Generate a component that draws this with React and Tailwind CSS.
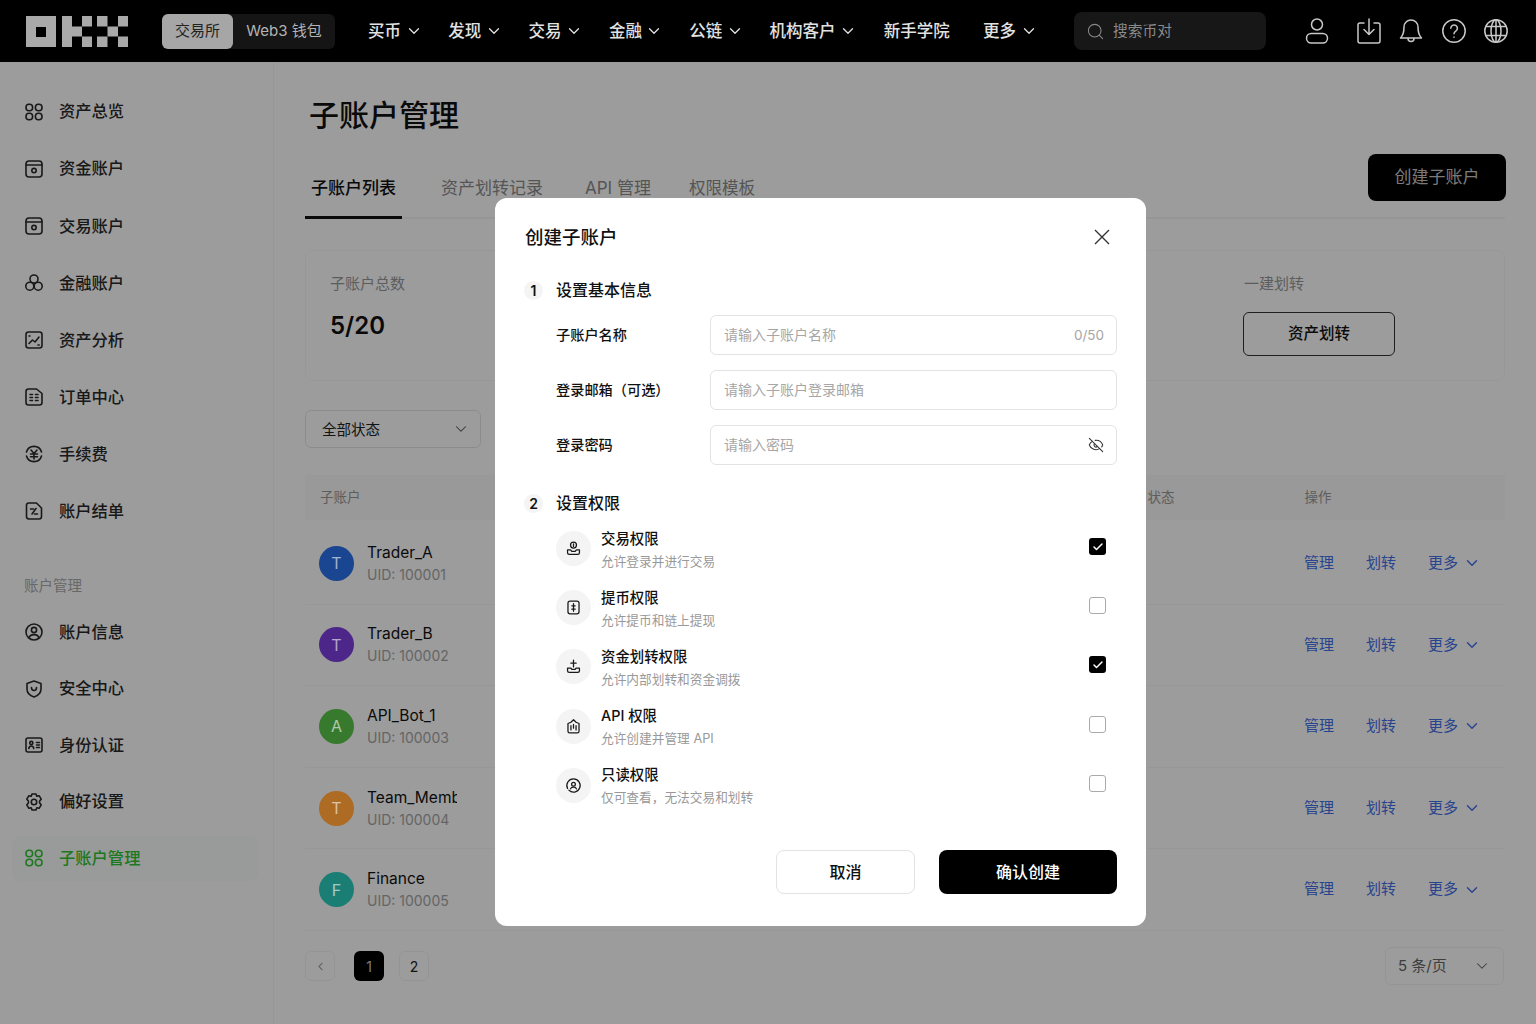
import { Check, ChevronDown, ChevronLeft, EyeOff, Search } from 'lucide-react'

const NAV = [
  { label: '买币', arrow: true },
  { label: '发现', arrow: true },
  { label: '交易', arrow: true },
  { label: '金融', arrow: true },
  { label: '公链', arrow: true },
  { label: '机构客户', arrow: true },
  { label: '新手学院', extra: 'ml-[1px]' },
  { label: '更多', arrow: true, extra: 'ml-[5px]' },
]

// sidebar glyphs, all drawn on a 20x20 box
const Glyph = ({ children, size = 20, className = '', width = 1.6 }) => (
  <svg width={size} height={size} viewBox="0 0 20 20" fill="none" stroke="currentColor" strokeWidth={width} strokeLinecap="round" strokeLinejoin="round" className={`shrink-0 ${className}`}>
    {children}
  </svg>
)

// the chevrons in the picture are about 10px wide, lucide's box is twice that
const Arrow = ({ width = 1.7 }) => (
  <ChevronDown size={18} strokeWidth={width} className="-mx-[2.500px] shrink-0" />
)

const ICONS = {
  grid: (
    <>
      <rect x="2" y="2.200" width="6.600" height="6.600" rx="3" />
      <rect x="11.400" y="2.200" width="6.600" height="6.600" rx="3" />
      <rect x="2" y="11.200" width="6.600" height="6.600" rx="3" />
      <rect x="11.400" y="11.200" width="6.600" height="6.600" rx="3" />
    </>
  ),
  wallet: (
    <>
      <rect x="2" y="2" width="16" height="16" rx="3" />
      <path d="M2 6h16" />
      <circle cx="10" cy="11.600" r="2.200" />
    </>
  ),
  rings: (
    <>
      <circle cx="10" cy="6" r="4" />
      <circle cx="5.800" cy="13.200" r="4" />
      <circle cx="14.200" cy="13.200" r="4" />
    </>
  ),
  chart: (
    <>
      <rect x="2" y="2" width="16" height="16" rx="2.500" />
      <path d="M5 13.500l3.500-3.500 2.500 2 4-5" />
      <path d="M14 15h1.200M5 6h1" />
    </>
  ),
  order: (
    <>
      <path d="M4.500 2h8L18 6.500V15.500a2.500 2.500 0 0 1-2.500 2.500h-11A2.500 2.500 0 0 1 2 15.500v-11A2.500 2.500 0 0 1 4.500 2z" />
      <path d="M6 7.500h2.500M11.500 7.500H14M6 10.500h2.500M11.500 10.500H14M6 13.500h2.500M11.500 13.500H14" />
    </>
  ),
  fee: (
    <>
      <path d="M2.500 8A7.800 7.800 0 0 1 17.500 8M17.500 12A7.800 7.800 0 0 1 2.500 12" />
      <path d="M7 6l3 3.500L13 6M6.500 10h7M6.500 12.800h7M10 9.500V15" />
    </>
  ),
  bill: (
    <>
      <path d="M4.500 2h8L17.500 7v8.500a2.500 2.500 0 0 1-2.500 2.500H5a2.500 2.500 0 0 1-2.500-2.500V4A2 2 0 0 1 4.500 2z" />
      <path d="M6.500 8h3M12 7.500L8 13M10.500 13h3" />
    </>
  ),
  user: (
    <>
      <circle cx="10" cy="10" r="8" />
      <circle cx="10" cy="8" r="2.600" />
      <path d="M5 16c.6-2.400 2.600-3.400 5-3.400s4.400 1 5 3.400" />
    </>
  ),
  shield: (
    <>
      <path d="M10 2l7 2.500V10c0 4-3 6.800-7 8-4-1.200-7-4-7-8V4.500z" />
      <path d="M7.500 8.500c0 1.700 1 3 2.500 3s2.500-1.300 2.500-3" />
    </>
  ),
  id: (
    <>
      <rect x="2" y="3" width="16" height="14" rx="2" />
      <circle cx="7.300" cy="8" r="1.600" />
      <path d="M4.800 13.500c.3-1.700 1.200-2.500 2.500-2.500s2.200.8 2.500 2.500M12.500 7.500h3M12.500 10h3M12.500 12.500h3" />
    </>
  ),
  gear: (
    <>
      <path d="M8 2h4l.8 2.300 2.300-.6 2.100 3.500-1.600 1.800v2l1.600 1.800-2.100 3.500-2.300-.6L12 18H8l-.8-2.300-2.300.6-2.100-3.500 1.600-1.800V9L2.800 7.200l2.100-3.500 2.300.6z" />
      <circle cx="10" cy="10" r="2.700" />
    </>
  ),
}

const MENU = [
  { label: '资产总览', icon: 'grid' },
  { label: '资金账户', icon: 'wallet' },
  { label: '交易账户', icon: 'wallet' },
  { label: '金融账户', icon: 'rings' },
  { label: '资产分析', icon: 'chart' },
  { label: '订单中心', icon: 'order' },
  { label: '手续费', icon: 'fee' },
  { label: '账户结单', icon: 'bill' },
]

const ACCOUNT_MENU = [
  { label: '账户信息', icon: 'user' },
  { label: '安全中心', icon: 'shield' },
  { label: '身份认证', icon: 'id' },
  { label: '偏好设置', icon: 'gear' },
  { label: '子账户管理', icon: 'grid', active: true },
]

const ROWS = [
  { name: 'Trader_A', uid: '100001', letter: 'T', color: 'bg-[#1a4590]' },
  { name: 'Trader_B', uid: '100002', letter: 'T', color: 'bg-[#4c2688]' },
  { name: 'API_Bot_1', uid: '100003', letter: 'A', color: 'bg-[#377a2e]' },
  { name: 'Team_Member', uid: '100004', letter: 'T', color: 'bg-[#ad6b24]' },
  { name: 'Finance', uid: '100005', letter: 'F', color: 'bg-[#1b7e75]' },
]

const PERMS = [
  {
    title: '交易权限',
    desc: '允许登录并进行交易',
    checked: true,
    icon: (
      <>
        <circle cx="10" cy="6" r="3.500" />
        <path d="M10 4.500v3M3 11.500h3.500l1.500 2h4l1.500-2H17v3.500a2 2 0 0 1-2 2H5a2 2 0 0 1-2-2z" />
      </>
    ),
  },
  {
    title: '提币权限',
    desc: '允许提币和链上提现',
    icon: (
      <>
        <rect x="3.500" y="2.500" width="13" height="15" rx="2.500" />
        <path d="M10 5.500v9M8 8h4M8 12h4" />
      </>
    ),
  },
  {
    title: '资金划转权限',
    desc: '允许内部划转和资金调拨',
    checked: true,
    icon: (
      <>
        <path d="M10 2.500v8M6.800 6h6.400" />
        <path d="M3 12h4l1 1.500h4l1-1.500h4v3a2 2 0 0 1-2 2H5a2 2 0 0 1-2-2z" />
      </>
    ),
  },
  {
    title: 'API 权限',
    desc: '允许创建并管理 API',
    icon: (
      <>
        <path d="M3.500 6.500L7 5l3-3 3 3 3.500 1.500V15.500a2 2 0 0 1-2 2h-9a2 2 0 0 1-2-2z" />
        <path d="M7 9v5M10 7.500V12M13 9v5" />
      </>
    ),
  },
  {
    title: '只读权限',
    desc: '仅可查看，无法交易和划转',
    icon: (
      <>
        <path d="M3 13.500A7.800 7.800 0 0 1 10 2.200a7.800 7.800 0 1 1-5.500 13.300" />
        <circle cx="10" cy="8.500" r="2.200" />
        <path d="M6.500 14c.5-1.500 2-2.200 3.500-2.200s3 .7 3.500 2.200" />
      </>
    ),
  },
]

function Logo() {
  return (
    <svg width="102" height="31" viewBox="0 0 102 31" fill="#a9a9a9" className="shrink-0">
      <path fillRule="evenodd" d="M0 0h30v31H0zM10 11v10h10V11z" />
      <rect x="36" width="10" height="31" />
      <rect x="46" y="10.500" width="10" height="10" />
      <rect x="56" width="10" height="10.500" />
      <rect x="56" y="20.500" width="10" height="10.500" />
      <rect x="71" width="10.500" height="10.500" />
      <rect x="92" width="10" height="10.500" />
      <rect x="81.500" y="10.500" width="10.500" height="10" />
      <rect x="71" y="20.500" width="10.500" height="10.500" />
      <rect x="92" y="20.500" width="10" height="10.500" />
    </svg>
  )
}

function Header() {
  return (
    <header className="relative z-20 flex h-[62px] shrink-0 items-center bg-black pl-[26px] pr-[28px]">
      <Logo />
      <div className="ml-[34px] flex h-[35px] w-[173px] items-stretch rounded-md bg-[#151515] text-[15px]">
        <span className="flex w-[71px] items-center justify-center rounded-md bg-[#a6a6a6] text-[#222]">交易所</span>
        <span className="flex flex-1 items-center justify-center text-[#b4b4b4]">Web3 钱包</span>
      </div>
      <nav className="ml-[33px] flex items-center gap-[28.300px] text-[16.500px] font-medium text-[#e2e2e2]">
        {NAV.map((item) => (
          <div key={item.label} className={`flex items-center gap-[6px] ${item.extra || ''}`}>
            {item.label}
            {item.arrow && <Arrow />}
          </div>
        ))}
      </nav>
      <div className="ml-[39px] flex h-[38px] w-[192px] items-center gap-[8px] rounded-lg bg-[#171717] pl-[12px] text-[14.700px] text-[#8a8a8a]">
        <Search size={19} strokeWidth={1.300} />
        搜索币对
      </div>
      <div className="ml-auto flex items-center text-[#c8c8c8]">
        <svg width="24" height="26" viewBox="0 0 24 26" fill="none" stroke="currentColor" strokeWidth="1.500">
          <circle cx="12" cy="6.500" r="5.500" />
          <rect x="1.500" y="15.500" width="21" height="9.500" rx="4.700" />
        </svg>
        <svg width="24" height="26" viewBox="0 0 24 26" fill="none" stroke="currentColor" strokeWidth="1.500" strokeLinecap="round" strokeLinejoin="round" className="ml-[28px]">
          <path d="M7 5H3a2 2 0 0 0-2 2v16a2 2 0 0 0 2 2h18a2 2 0 0 0 2-2V7a2 2 0 0 0-2-2h-4" />
          <path d="M12 1v15M7 11.500l5 5 5-5" />
        </svg>
        <svg width="24" height="26" viewBox="0 0 24 26" fill="none" stroke="currentColor" strokeWidth="1.500" strokeLinecap="round" strokeLinejoin="round" className="ml-[18px]">
          <path d="M12 2a7 7 0 0 0-7 7c0 7-1.500 9-3.500 11h21c-2-2-3.500-4-3.500-11a7 7 0 0 0-7-7z" />
          <path d="M9 20.500a3 3 0 0 0 6 0" />
        </svg>
        <svg width="24" height="24" viewBox="0 0 24 24" fill="none" stroke="currentColor" strokeWidth="1.500" strokeLinecap="round" className="ml-[19px]">
          <circle cx="12" cy="12" r="11.200" />
          <path d="M8.800 9.200a3.300 3.300 0 1 1 5 2.900c-1.100.7-1.800 1.300-1.800 2.700" />
          <path d="M12 18v.2" />
        </svg>
        <svg width="24" height="24" viewBox="0 0 24 24" fill="none" stroke="currentColor" strokeWidth="1.500" className="ml-[18px]">
          <circle cx="12" cy="12" r="11.200" />
          <ellipse cx="12" cy="12" rx="5" ry="11.200" />
          <path d="M12 .8v22.400M2 7.500h20M2 16.500h20" />
        </svg>
      </div>
    </header>
  )
}

function MenuItem({ item, height }) {
  return (
    <div className={`flex items-center ${height}`}>
      <div className={`ml-3 mr-[15px] flex h-[45px] flex-1 items-center gap-[15px] rounded-lg pl-[12px] text-[16.300px] font-medium ${item.active ? 'bg-green-500/[0.02] text-[#32c534]' : 'text-[#2a2a2a]'}`}>
        <Glyph>{ICONS[item.icon]}</Glyph>
        {item.label}
      </div>
    </div>
  )
}

function Sidebar() {
  return (
    <aside className="w-[274px] shrink-0 border-r border-black/[0.03] pt-[21px]">
      {MENU.map((item) => <MenuItem key={item.label} item={item} height="h-[57.100px]" />)}
      <div className="ml-6 mt-[36px] mb-[8px] text-[14.500px] leading-5 text-[#aaa]">账户管理</div>
      {ACCOUNT_MENU.map((item) => <MenuItem key={item.label} item={item} height="h-[56.500px]" />)}
    </aside>
  )
}

function Row({ row }) {
  return (
    <div className="flex h-[81.600px] items-center border-b border-black/[0.03] pl-[14px] pr-[27px]">
      <span className={`relative z-20 flex h-[35px] w-[35px] shrink-0 items-center justify-center rounded-full text-[16px] text-white/60 ${row.color}`}>{row.letter}</span>
      <div className="ml-[13px] w-[90px] overflow-hidden">
        <div className="whitespace-nowrap text-[15.500px] leading-[22px] text-[#111]">{row.name}</div>
        <div className="mt-[1px] whitespace-nowrap text-[14px] leading-5 text-[#a6a6a6]">UID: {row.uid}</div>
      </div>
      <div className="ml-auto flex items-center gap-[32px] text-[15px] text-[#446fe8]">
        <span>管理</span>
        <span>划转</span>
        <span className="flex items-center gap-[7px]">更多<Arrow width={1.900} /></span>
      </div>
    </div>
  )
}

function Main() {
  return (
    <main className="min-w-0 flex-1 pl-[31px] pr-[31px]">
      <h1 className="mt-[33px] pl-[4px] text-[30px] font-medium leading-10 text-[#111]">子账户管理</h1>
      <div className="mt-[19px] flex h-[65px] items-start justify-between border-b-2 border-black/[0.04]">
        <div className="flex h-[64px] items-end gap-[39px] text-[17px] text-[#8c8c8c]">
          <span className="-mb-[1px] border-b-[3px] border-[#111] px-[6px] pb-[16px] font-medium leading-6 text-[#111]">子账户列表</span>
          <span className="pb-[18px] leading-6">资产划转记录</span>
          <span className="ml-[3px] pb-[18px] leading-6">API 管理</span>
          <span className="-ml-[1px] pb-[18px] text-[16.500px] leading-6">权限模板</span>
        </div>
        <button className="-mr-[1px] h-[47px] w-[138px] rounded-lg bg-black text-[17px] text-[#c9c9c9]">创建子账户</button>
      </div>
      <section className="mt-[31px] flex h-[131px] rounded-lg border border-black/[0.03] pl-[24px] pt-[23px]">
        <div>
          <div className="text-[15px] leading-5 text-[#999]">子账户总数</div>
          <div className="mt-[16px] text-[24px] font-semibold leading-8 text-[#111]">5/20</div>
        </div>
        <div className="ml-[839px]">
          <div className="text-[15px] leading-5 text-[#999]">一建划转</div>
          <button className="mt-[18px] h-[44px] w-[152px] -translate-x-[1px] rounded-md border border-[#333] text-[15.500px] font-medium text-[#111]">资产划转</button>
        </div>
      </section>
      <div className="mt-[29px] flex h-[38px] w-[176px] items-center justify-between rounded-md border border-black/10 pl-[16px] pr-[13px] text-[14.500px] text-[#222]">
        <span className="pt-[1px]">全部状态</span>
        <span className="flex text-[#555]"><Arrow width={1.400} /></span>
      </div>
      <div className="mt-[27px] flex h-[45px] items-center bg-black/[0.015] pl-[15px] text-[13.500px] text-[#999]">
        <span>子账户</span>
        <span className="ml-[787px]">状态</span>
        <span className="ml-[130px]">操作</span>
      </div>
      <div className="pt-[3px]">
        {ROWS.map((row) => <Row key={row.uid} row={row} />)}
      </div>
      <div className="mt-[16.500px] flex h-[38px] items-center justify-between">
        <div className="flex items-center text-[14px]">
          <span className="flex h-[30px] w-[30px] items-center justify-center rounded-md border border-black/5 text-[#aaa]"><ChevronLeft size={13} /></span>
          <span className="ml-[19px] flex h-[30px] w-[30px] items-center justify-center rounded-md bg-black text-[#ccc]">1</span>
          <span className="ml-[15px] flex h-[30px] w-[30px] items-center justify-center rounded-md border border-black/5 text-[#222]">2</span>
        </div>
        <div className="mr-[1px] flex h-[38px] w-[119px] items-center justify-between rounded-md border border-black/5 pl-[12px] pr-[15px] text-[15px] text-[#666]">
          5 条/页
          <Arrow width={1.400} />
        </div>
      </div>
    </main>
  )
}

function StepTitle({ n, children }) {
  return (
    <div className="-ml-[1px] flex h-[22px] items-center gap-[13px]">
      <span className="flex h-[19px] w-[19px] items-center justify-center rounded-full bg-[#f4f4f4] text-[14px] font-semibold text-[#111]">{n}</span>
      <span className="text-[16px] font-medium text-[#111]">{children}</span>
    </div>
  )
}

function Field({ label, placeholder, type = 'text', children }) {
  return (
    <div className="flex h-[40px] items-center pl-[31px]">
      <label className="w-[154px] shrink-0 text-[14.200px] font-medium text-[#111]">{label}</label>
      <div className="flex h-full flex-1 items-center rounded-md border border-[#e3e3e3] pl-[13px] pr-[12px]">
        <input type={type} placeholder={placeholder} className="min-w-0 flex-1 bg-transparent pb-[2px] text-[14px] outline-none placeholder:text-[#a6a6a6]" />
        {children}
      </div>
    </div>
  )
}

function Perm({ perm }) {
  return (
    <div className="flex h-[59.200px] items-center pl-[31px] pr-[11px]">
      <span className="flex h-[35px] w-[35px] shrink-0 items-center justify-center rounded-full bg-[#f4f4f4] text-[#1a1a1a]">
        <Glyph size={17} width={1.500}>{perm.icon}</Glyph>
      </span>
      <div className="ml-[10px] flex-1 pt-[2px]">
        <div className="text-[14.400px] font-medium leading-5 text-[#111]">{perm.title}</div>
        <div className="mt-[4px] text-[12.700px] leading-[18px] text-[#999]">{perm.desc}</div>
      </div>
      <span className={`-mt-[4px] flex h-[17px] w-[17px] items-center justify-center rounded-[3px] ${perm.checked ? 'bg-black text-white' : 'border-[1.500px] border-[#aaa]'}`}>
        {perm.checked && <Check size={12} strokeWidth={3} />}
      </span>
    </div>
  )
}

function CreateDialog() {
  return (
    <div className="absolute inset-x-0 bottom-0 top-[62px] z-10 flex justify-center bg-black/[0.39]">
      <div className="ml-[105px] mt-[136px] h-[728px] w-[651px] rounded-xl bg-white pl-[30px] pr-[29px] pt-[26px]">
        <div className="flex h-[26px] items-center justify-between">
          <h2 className="pt-[1px] text-[18.500px] font-medium text-[#111]">创建子账户</h2>
          <svg width="16" height="16" viewBox="0 0 16 16" stroke="#333" strokeWidth="1.400" className="mr-[7px]">
            <path d="M1 1l14 14M15 1L1 15" />
          </svg>
        </div>
        <div className="mt-[29px]"><StepTitle n="1">设置基本信息</StepTitle></div>
        <div className="mt-[14px] flex flex-col gap-[15px]">
          <Field label="子账户名称" placeholder="请输入子账户名称">
            <span className="text-[13.500px] text-[#a6a6a6]">0/50</span>
          </Field>
          <Field label="登录邮箱（可选）" placeholder="请输入子账户登录邮箱" />
          <Field label="登录密码" placeholder="请输入密码" type="password">
            <EyeOff size={16} strokeWidth={1.600} className="text-[#333]" />
          </Field>
        </div>
        <div className="mt-[27px]"><StepTitle n="2">设置权限</StepTitle></div>
        <div className="mt-[5px]">
          {PERMS.map((perm) => <Perm key={perm.title} perm={perm} />)}
        </div>
        <div className="mt-[35px] flex justify-end gap-[24px] text-[16px] font-medium">
          <button className="h-[44px] w-[139px] rounded-lg border border-[#e3e3e3] text-[#111]">取消</button>
          <button className="h-[44px] w-[178px] rounded-lg bg-black text-white">确认创建</button>
        </div>
      </div>
    </div>
  )
}

export default function App() {
  return (
    <div lang="zh-CN" className="relative flex h-[1024px] flex-col overflow-hidden bg-white font-['Inter','Noto_Sans_CJK_SC',sans-serif]">
      <Header />
      <div className="flex min-h-0 flex-1">
        <Sidebar />
        <Main />
      </div>
      <CreateDialog />
    </div>
  )
}
